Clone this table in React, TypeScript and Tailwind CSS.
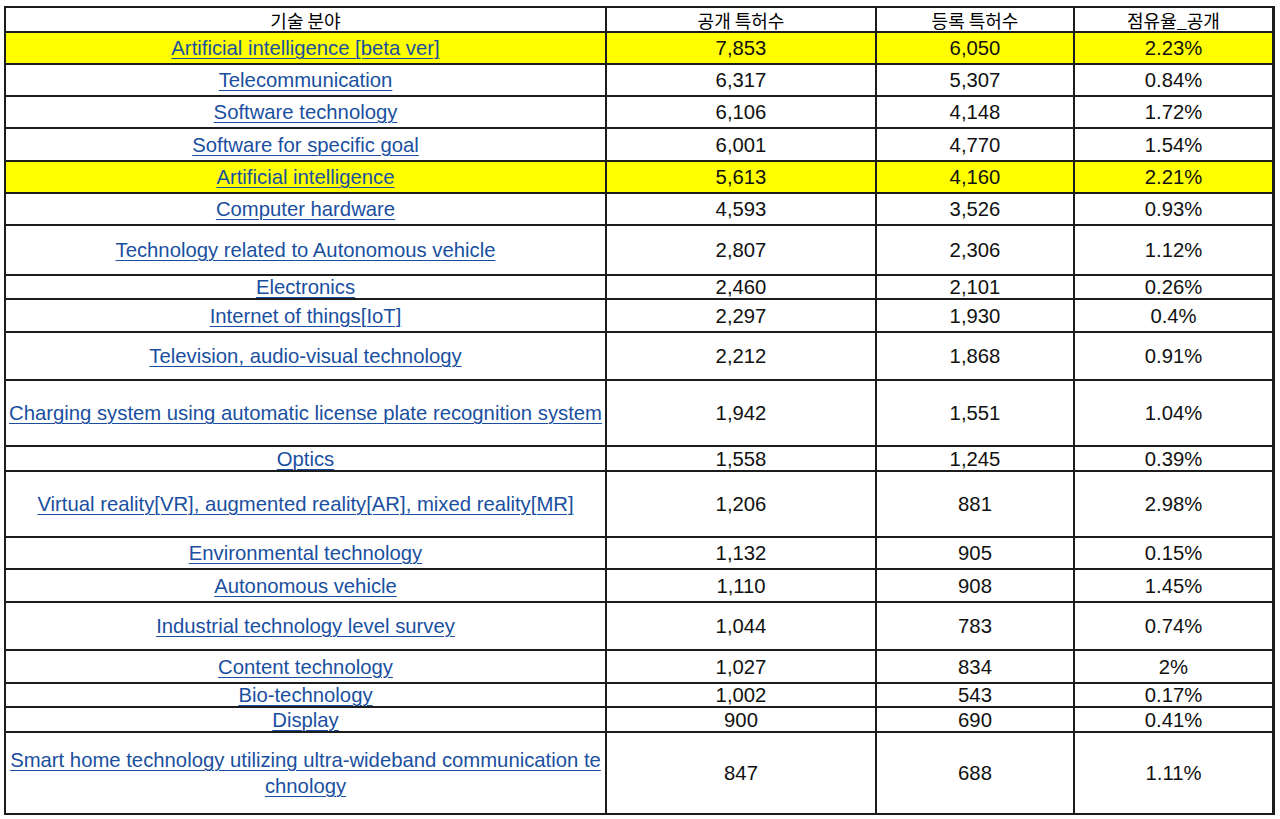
type Row = {
  name: string
  second?: string
  open: string
  reg: string
  share: string
  h: string
  hl?: boolean
}

const rows: Row[] = [
  { name: 'Artificial intelligence [beta ver]', open: '7,853', reg: '6,050', share: '2.23%', h: 'h-[30px]', hl: true },
  { name: 'Telecommunication', open: '6,317', reg: '5,307', share: '0.84%', h: 'h-[30px]' },
  { name: 'Software technology', open: '6,106', reg: '4,148', share: '1.72%', h: 'h-[30px]' },
  { name: 'Software for specific goal', open: '6,001', reg: '4,770', share: '1.54%', h: 'h-[31px]' },
  { name: 'Artificial intelligence', open: '5,613', reg: '4,160', share: '2.21%', h: 'h-[30px]', hl: true },
  { name: 'Computer hardware', open: '4,593', reg: '3,526', share: '0.93%', h: 'h-[30px]' },
  { name: 'Technology related to Autonomous vehicle', open: '2,807', reg: '2,306', share: '1.12%', h: 'h-[48px]' },
  { name: 'Electronics', open: '2,460', reg: '2,101', share: '0.26%', h: 'h-[22px]' },
  { name: 'Internet of things[IoT]', open: '2,297', reg: '1,930', share: '0.4%', h: 'h-[31px]' },
  { name: 'Television, audio-visual technology', open: '2,212', reg: '1,868', share: '0.91%', h: 'h-[46px]' },
  { name: 'Charging system using automatic license plate recognition system', open: '1,942', reg: '1,551', share: '1.04%', h: 'h-[64px]' },
  { name: 'Optics', open: '1,558', reg: '1,245', share: '0.39%', h: 'h-[23px]' },
  { name: 'Virtual reality[VR], augmented reality[AR], mixed reality[MR]', open: '1,206', reg: '881', share: '2.98%', h: 'h-[64px]' },
  { name: 'Environmental technology', open: '1,132', reg: '905', share: '0.15%', h: 'h-[30px]' },
  { name: 'Autonomous vehicle', open: '1,110', reg: '908', share: '1.45%', h: 'h-[31px]' },
  { name: 'Industrial technology level survey', open: '1,044', reg: '783', share: '0.74%', h: 'h-[46px]' },
  { name: 'Content technology', open: '1,027', reg: '834', share: '2%', h: 'h-[31px]' },
  { name: 'Bio-technology', open: '1,002', reg: '543', share: '0.17%', h: 'h-[22px]' },
  { name: 'Display', open: '900', reg: '690', share: '0.41%', h: 'h-[23px]' },
  {
    name: 'Smart home technology utilizing ultra-wideband communication te',
    second: 'chnology',
    open: '847',
    reg: '688',
    share: '1.11%',
    h: 'h-[80px]',
  },
]

const headers = ['기술 분야', '공개 특허수', '등록 특허수', '점유율_공개']

function Cell({ children, className }: { children: React.ReactNode; className?: string }) {
  return (
    <div className={`flex items-center justify-center text-center ${className ?? ''}`}>
      {children}
    </div>
  )
}

export default function App() {
  return (
    <div className="min-h-[819px] w-[1280px] bg-white pl-[4px] pt-[6px] font-['Liberation_Sans','Noto_Sans_CJK_KR',sans-serif] text-[20.3px] leading-[26px] text-[#111]">
      <div className="grid w-[1271px] grid-cols-[599px_268px_196px_197px] gap-[2px] bg-[#1c1c1c] p-[2px]">
        {headers.map((h) => (
          <Cell
            key={h}
            className="h-[23px] bg-white font-['Noto_Sans_CJK_KR','Liberation_Sans',sans-serif] text-[18px] leading-[22px] text-black"
          >
            {h}
          </Cell>
        ))}

        {rows.map((r) => {
          const bg = r.hl ? 'bg-[#ffff00]' : 'bg-white'
          return (
            <div key={r.name} className="contents">
              <Cell className={`${r.h} ${bg} px-[1px]`}>
                <span className="whitespace-nowrap text-[#1a4f9f] underline decoration-1 underline-offset-[3px]">
                  {r.name}
                  {r.second && (
                    <>
                      <br />
                      {r.second}
                    </>
                  )}
                </span>
              </Cell>
              <Cell className={`${r.h} ${bg}`}>{r.open}</Cell>
              <Cell className={`${r.h} ${bg}`}>{r.reg}</Cell>
              <Cell className={`${r.h} ${bg}`}>{r.share}</Cell>
            </div>
          )
        })}
      </div>
    </div>
  )
}
